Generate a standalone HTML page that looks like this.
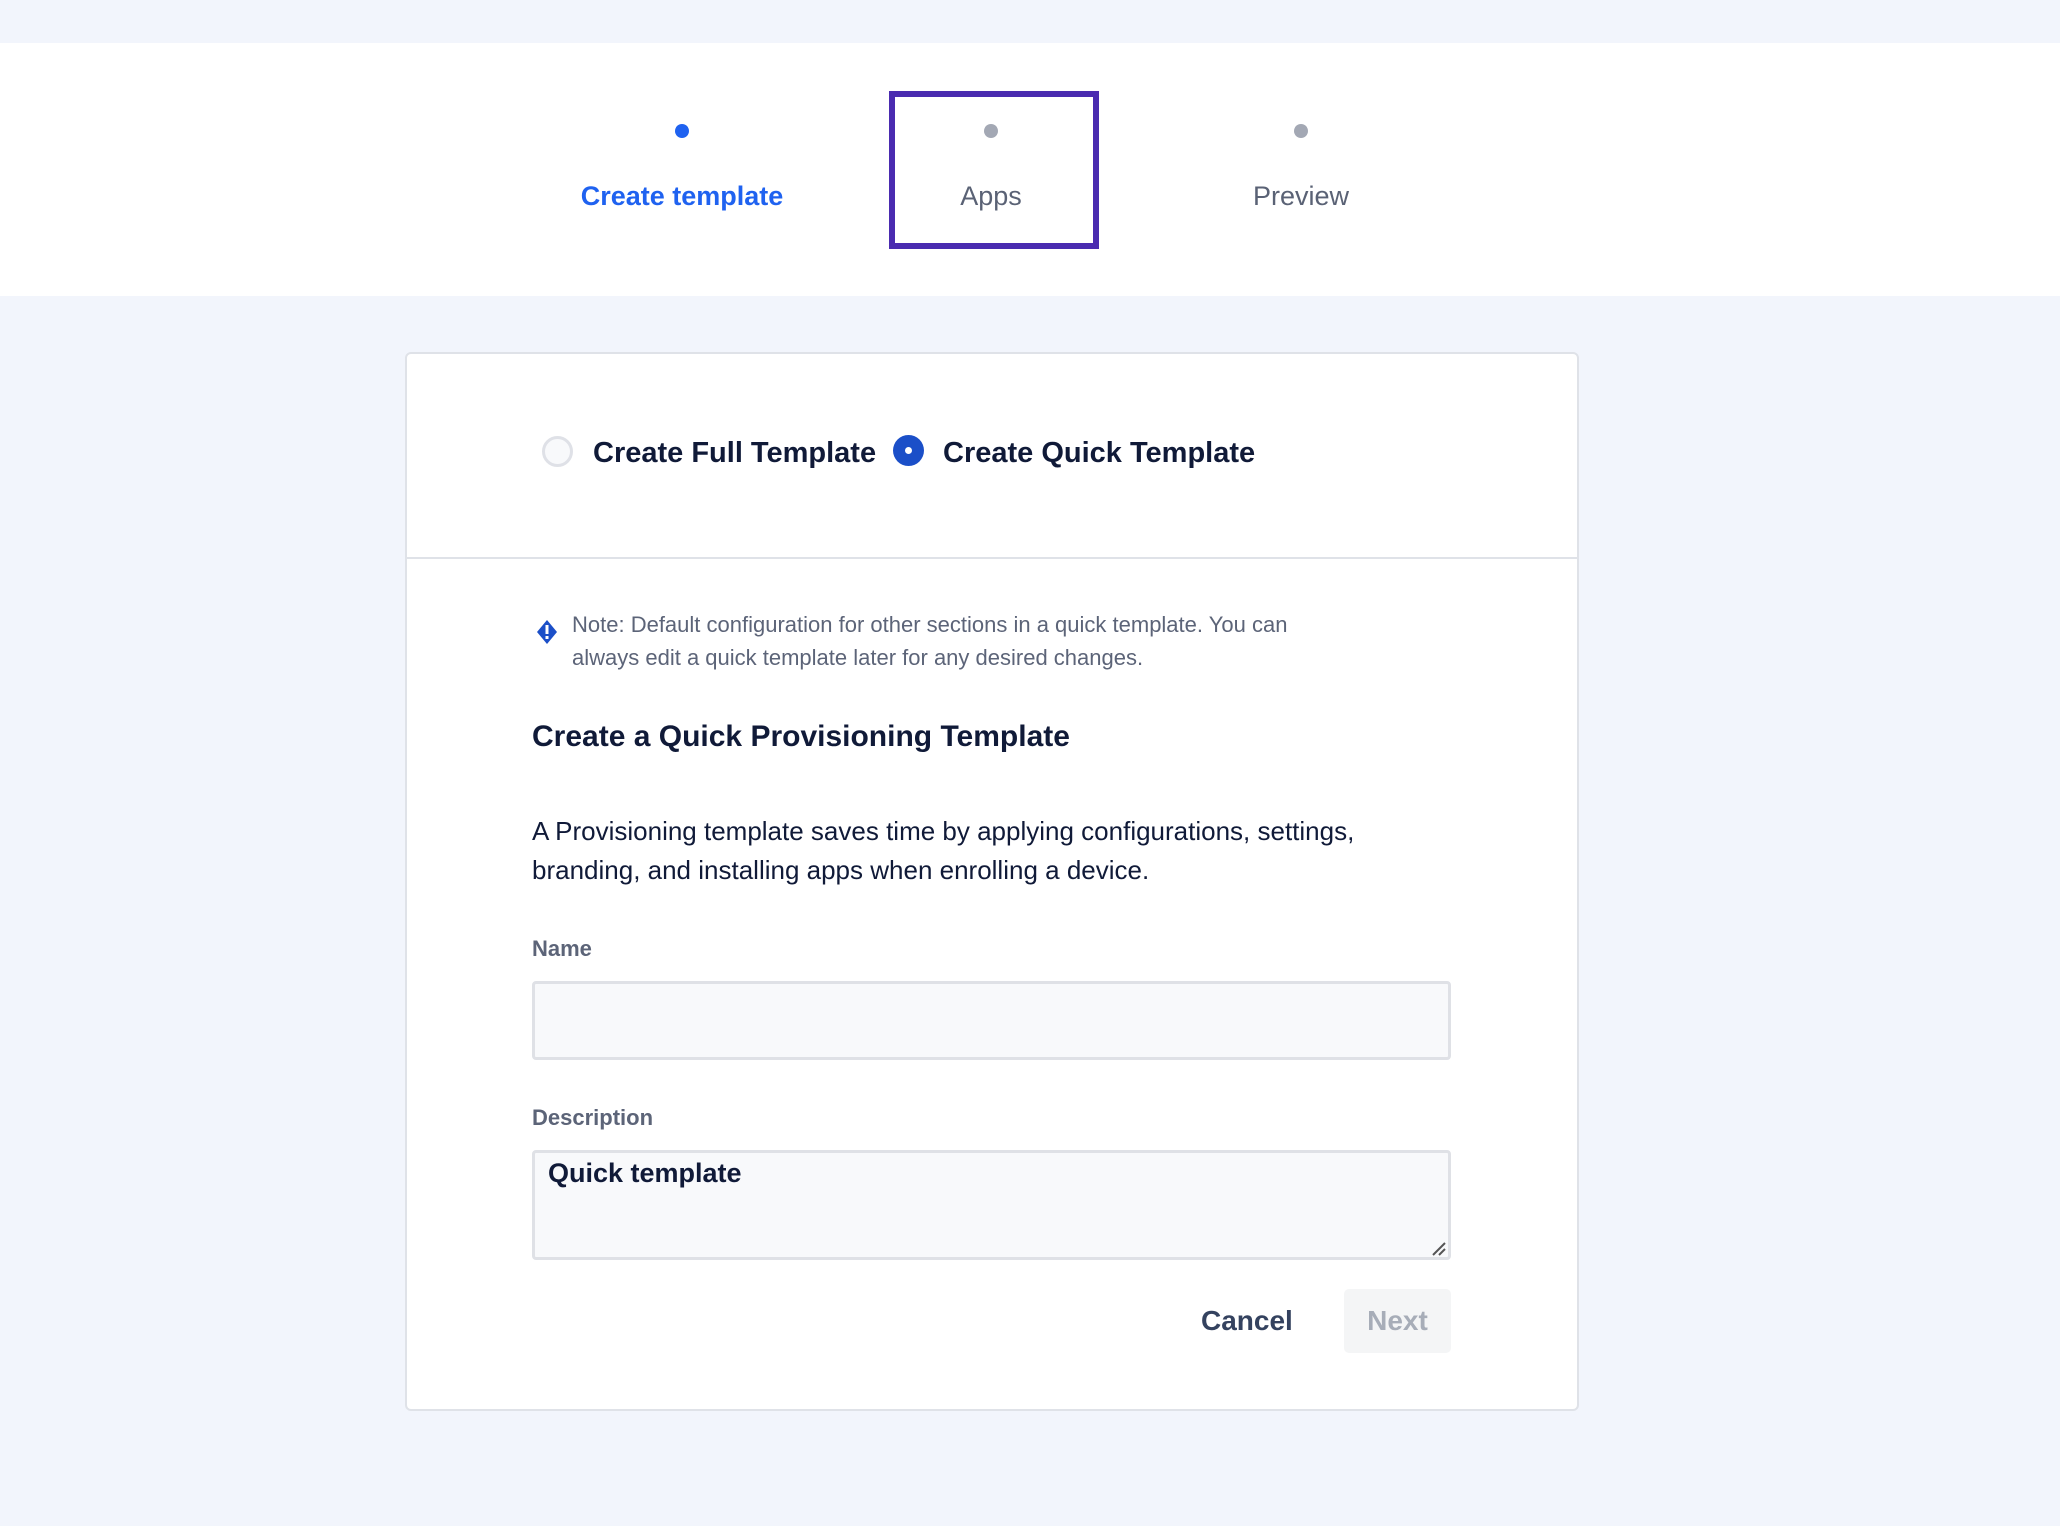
<!DOCTYPE html>
<html><head><meta charset="utf-8"><style>
*{box-sizing:border-box;margin:0;padding:0}
body{width:2060px;height:1526px;background:#f2f5fc;font-family:"Liberation Sans",sans-serif;position:relative;overflow:hidden}
.a{position:absolute}
.hdr{left:0;top:43px;width:2060px;height:253px;background:#fff}
.dot{width:14px;height:14px;border-radius:50%;background:#a3a8b4}
.lbl{font-size:27px;transform:translateX(-50%);white-space:nowrap;top:181px;color:#5a6275}
.card{left:405px;top:352px;width:1174px;height:1059px;background:#fff;border:2px solid #dfe2e8;border-radius:6px}
.rt{font-size:29px;font-weight:bold;color:#101a38;top:437px}
</style></head><body>
<div class="a hdr"></div>
<div class="a dot" style="left:675px;top:124px;background:#1f62f0"></div>
<div class="a dot" style="left:984px;top:124px"></div>
<div class="a dot" style="left:1294px;top:124px"></div>
<div class="a lbl" style="left:682px;color:#1f62f0;font-weight:bold">Create template</div>
<div class="a lbl" style="left:991px">Apps</div>
<div class="a lbl" style="left:1301px">Preview</div>
<div class="a" style="left:889px;top:91px;width:210px;height:158px;border:6px solid #4a2bb0"></div>
<div class="a card"></div>
<div class="a" style="left:407px;top:557px;width:1170px;height:2px;background:#dfe2e8"></div>
<div class="a" style="left:542px;top:436px;width:31px;height:31px;border-radius:50%;border:3px solid #dfe1e7;background:#f8f9fb"></div>
<div class="a rt" style="left:593px">Create Full Template</div>
<div class="a" style="left:893px;top:435px;width:31px;height:31px;border-radius:50%;background:#1b4fc8"></div>
<div class="a" style="left:905px;top:447px;width:7px;height:7px;border-radius:50%;background:#fff"></div>
<div class="a rt" style="left:943px">Create Quick Template</div>
<svg class="a" style="left:536px;top:619px" width="22" height="26" viewBox="0 0 22 26"><path d="M11 1L21 13L11 25L1 13Z" fill="#1b4fc8"/><rect x="9.5" y="6" width="3" height="9" fill="#fff"/><rect x="9.5" y="17" width="3" height="3" fill="#fff"/></svg>
<div class="a" style="left:572px;top:608px;width:760px;font-size:22px;line-height:33px;color:#5c6478">Note: Default configuration for other sections in a quick template. You can always edit a quick template later for any desired changes.</div>
<div class="a" style="left:532px;top:720px;font-size:30px;font-weight:bold;color:#101a38">Create a Quick Provisioning Template</div>
<div class="a" style="left:532px;top:812px;width:920px;font-size:26px;line-height:39px;color:#101a38">A Provisioning template saves time by applying configurations, settings, branding, and installing apps when enrolling a device.</div>
<div class="a" style="left:532px;top:936px;font-size:22px;font-weight:bold;color:#5c6478">Name</div>
<div class="a" style="left:532px;top:981px;width:919px;height:79px;border:3px solid #dfe1e6;border-radius:4px;background:#f8f9fb"></div>
<div class="a" style="left:532px;top:1105px;font-size:22px;font-weight:bold;color:#5c6478">Description</div>
<div class="a" style="left:532px;top:1150px;width:919px;height:110px;border:3px solid #dfe1e6;border-radius:4px;background:#f8f9fb"></div>
<div class="a" style="left:548px;top:1158px;font-size:27px;font-weight:bold;color:#101a38">Quick template</div>
<svg class="a" style="left:1432px;top:1242px" width="14" height="14"><path d="M1 13L13 1M7 13L13 7" stroke="#555" stroke-width="2"/></svg>
<div class="a" style="left:1201px;top:1305px;font-size:28px;font-weight:bold;color:#34425f">Cancel</div>
<div class="a" style="left:1344px;top:1289px;width:107px;height:64px;background:#f4f5f6;border-radius:5px;font-size:28px;font-weight:bold;color:#a7adb8;text-align:center;line-height:64px">Next</div>
</body></html>
